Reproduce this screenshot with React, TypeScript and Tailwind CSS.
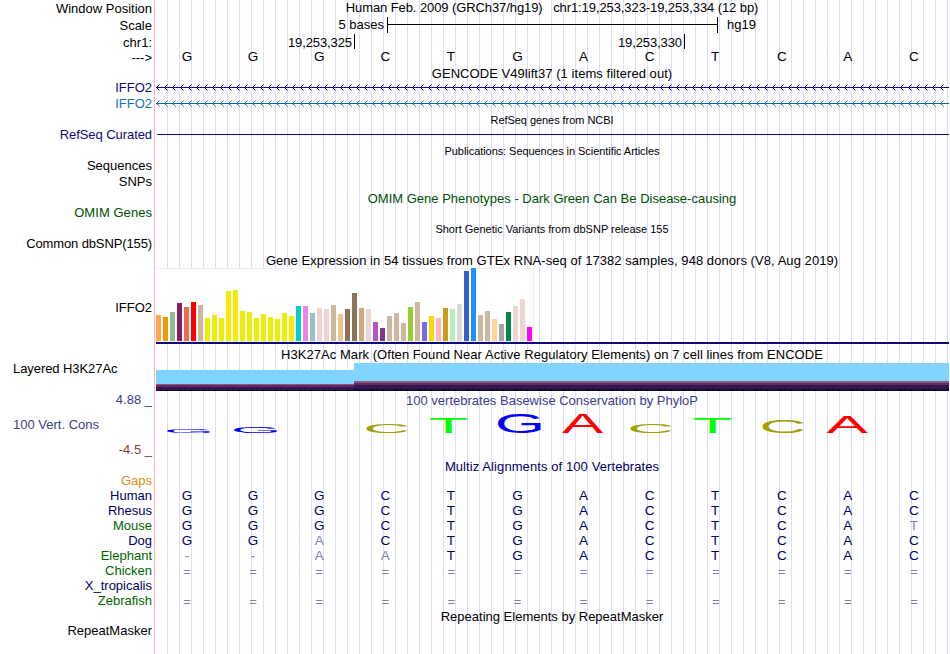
import type { ReactNode } from 'react';

const BASES = 'GGGCTGACTCAC'.split('');

const tissues: [string, number][] = [
  ['#ffa54f', 26], ['#ee9a00', 24], ['#8fbc8f', 29], ['#8b1c62', 38], ['#ee6a50', 34], ['#ff0000', 39],
  ['#cdb79e', 36], ['#eeee00', 23], ['#eeee00', 26], ['#eeee00', 23], ['#eeee00', 50], ['#eeee00', 51],
  ['#eeee00', 30], ['#eeee00', 29], ['#eeee00', 23], ['#eeee00', 27], ['#eeee00', 24], ['#eeee00', 22],
  ['#eeee00', 28], ['#eeee00', 25], ['#00cdcd', 35], ['#ee82ee', 35], ['#9ac0cd', 28], ['#eed5d2', 33],
  ['#eed5d2', 32], ['#cdb79e', 36], ['#eec591', 27], ['#8b7355', 32], ['#8b7355', 48], ['#cdaa7d', 33],
  ['#eed5d2', 32], ['#b452cd', 19], ['#7a378b', 13], ['#cdb79e', 25], ['#cdb79e', 28], ['#cdb79e', 18],
  ['#9acd32', 34], ['#cdb79e', 39], ['#7a67ee', 19], ['#ffd700', 25], ['#ffb6c1', 23], ['#cd9b1d', 33],
  ['#b4eeb4', 32], ['#d9d9d9', 37], ['#3a5fcd', 70], ['#1e90ff', 73], ['#cdb79e', 26], ['#cdb79e', 30],
  ['#ffd39b', 22], ['#a6a6a6', 17], ['#008b45', 29], ['#eed5d2', 35], ['#eed5d2', 42], ['#ff00ff', 14],
];

// letter, left edge, top edge, fill
const logo: [string, number, number, string][] = [
  ['G', 12, 22.2, '#0000ff'],
  ['G', 79, 19.5, '#0000ff'],
  ['C', 211.5, 17.3, '#a0a000'],
  ['T', 275, 10.4, '#00ff00'],
  ['G', 343, 6.2, '#0000ff'],
  ['A', 407, 7, '#ff0000'],
  ['C', 475.5, 17.3, '#a0a000'],
  ['T', 539, 10.4, '#00ff00'],
  ['C', 607.5, 12.3, '#a0a000'],
  ['A', 671.5, 9, '#ff0000'],
];

// side bearing, font size, cap height and baseline of each logo letter
const ink: Record<string, { left: number; size: number; cap: number; base: number }> = {
  G: { left: 3.3, size: 65, cap: 0.72, base: 25.6 },
  C: { left: 3.3, size: 65, cap: 0.72, base: 25.6 },
  T: { left: 1.3, size: 65, cap: 0.688, base: 26 },
  A: { left: 0, size: 62, cap: 0.688, base: 26 },
};

// lower case marks a base that differs from the human one
const species = [
  { name: 'Human', green: false, seq: 'GGGCTGACTCAC' },
  { name: 'Rhesus', green: false, seq: 'GGGCTGACTCAC' },
  { name: 'Mouse', green: true, seq: 'GGGCTGACTCAt' },
  { name: 'Dog', green: false, seq: 'GGaCTGACTCAC' },
  { name: 'Elephant', green: true, seq: '--aaTGACTCAC' },
  { name: 'Chicken', green: true, seq: '============' },
  { name: 'X_tropicalis', green: false, seq: '' },
  { name: 'Zebrafish', green: true, seq: '============' },
];

interface RowProps {
  label?: string;
  labelClass?: string;
  className: string;
  children?: ReactNode;
}

function Row({ label, labelClass = '', className, children }: RowProps) {
  return (
    <div className={`flex shrink-0 ${className}`}>
      <div className={`w-[155px] shrink-0 pr-[3px] text-right ${labelClass}`}>{label}</div>
      <div className="w-[794px] shrink-0">{children}</div>
    </div>
  );
}

function Title({ small, className = '', children }: { small?: boolean; className?: string; children: ReactNode }) {
  return (
    <div
      className={`text-center whitespace-pre ${small ? 'pt-0.5 text-[11px] leading-[12px]' : 'pt-px'} ${className}`}
    >
      {children}
    </div>
  );
}

function letterClass(c: string) {
  if (c === '=') return 'pt-px text-[13px] text-[#8080b0]';
  if (c === 'T') return '-ml-px';
  return /[a-z-]/.test(c) ? 'text-[#8080b0]' : '';
}

function Letters({ seq }: { seq: string[] }) {
  return (
    <div className="-ml-px grid w-[793px] grid-cols-12 text-center text-[13.5px] leading-[15px]">
      {seq.map((c, i) => (
        <span key={i} className={letterClass(c)}>
          {c.toUpperCase()}
        </span>
      ))}
    </div>
  );
}

function Intron({ color }: { color: string }) {
  return (
    <svg width="794" height="16" className="block" shapeRendering="crispEdges" fill={color}>
      <rect x="1" y="7" width="793" height="1" />
      {Array.from({ length: 99 }, (_, i) => (
        <g key={i} transform={`translate(${1 + i * 8} 0)`}>
          <rect x="1" y="6" width="1" height="3" />
          <rect x="2" y="5" width="1" height="1" />
          <rect x="2" y="9" width="1" height="1" />
          <rect x="3" y="4" width="1" height="1" opacity="0.5" />
          <rect x="3" y="10" width="1" height="1" opacity="0.5" />
        </g>
      ))}
    </svg>
  );
}

function ConservationLogo() {
  return (
    <svg width="794" height="50" className="block" fontFamily="Liberation Sans, sans-serif">
      {logo.map(([c, x, top, fill], i) => {
        const { left, size, cap, base } = ink[c];
        const scale = (26 - top) / (size * cap);
        return (
          <text key={i} transform={`translate(${x - left} ${base}) scale(1 ${scale})`} fontSize={size} fill={fill}>
            {c}
          </text>
        );
      })}
    </svg>
  );
}

export default function App() {
  return (
    <div className="flex h-[654px] w-[950px] overflow-hidden bg-white font-['Liberation_Sans',Arial,sans-serif] text-[13px] leading-[15px] text-black">
      <div className="flex w-[949px] flex-col bg-[linear-gradient(to_right,white_154px,#ffb4b4_154px,#ffb4b4_155px,white_155px,white_158px,transparent_158px),repeating-linear-gradient(to_right,#dcdcff_0px,#dcdcff_1px,white_1px,white_12px)] bg-no-repeat [background-position:0_0,11px_0]">
        {/* Ruler */}
        <Row className="h-[17px]" label="Window Position" labelClass="pt-px">
          <div className="text-center tracking-[-0.09px] whitespace-pre">
            Human Feb. 2009 (GRCh37/hg19){'   '}chr1:19,253,323-19,253,334 (12 bp)
          </div>
        </Row>
        <Row className="h-4" label="Scale" labelClass="pt-px">
          <div className="flex">
            <span className="w-[229px] text-right">5 bases</span>
            <div className="ml-[3px] flex h-4 w-[331px] items-center border-x border-black">
              <div className="-mt-px h-px w-full bg-black" />
            </div>
            <span className="ml-[9px]">hg19</span>
          </div>
        </Row>
        <Row className="h-4" label="chr1:" labelClass="pt-0.5">
          <div className="flex pt-px text-right tracking-[-0.1px]">
            <span className="h-[15px] w-[200px] border-r border-black pt-px pr-0.5">19,253,325</span>
            <span className="h-[15px] w-[330px] border-r border-black pt-px pr-0.5">19,253,330</span>
          </div>
        </Row>
        <Row className="h-4" label="--->" labelClass="pt-px">
          <Letters seq={BASES} />
        </Row>

        {/* Genes */}
        <Row className="h-[15px]">
          <Title className="tracking-[0.05px]">GENCODE V49lift37 (1 items filtered out)</Title>
        </Row>
        <Row className="h-4" label="IFFO2" labelClass="text-[#0c0c78]">
          <Intron color="#0c0c78" />
        </Row>
        <Row className="h-4" label="IFFO2" labelClass="text-[#1874b8]">
          <Intron color="#1464a8" />
        </Row>
        <Row className="h-[15px]">
          <Title small className="tracking-[-0.05px]">RefSeq genes from NCBI</Title>
        </Row>
        <Row className="h-4" label="RefSeq Curated" labelClass="tracking-[-0.07px] text-[#0c0c78]">
          <div className="mt-[7px] ml-0.5 h-px bg-[#0c0c78]" />
        </Row>

        {/* Literature and variants */}
        <Row className="h-[15px]">
          <Title small className="tracking-[-0.06px]">Publications: Sequences in Scientific Articles</Title>
        </Row>
        <Row className="h-4" label="Sequences" />
        <Row className="h-4" label="SNPs" />
        <Row className="h-[15px]">
          <Title className="text-[#005000]">OMIM Gene Phenotypes - Dark Green Can Be Disease-causing</Title>
        </Row>
        <Row className="h-4" label="OMIM Genes" labelClass="tracking-[0.05px] text-[#005000]" />
        <Row className="h-[15px]">
          <Title small>Short Genetic Variants from dbSNP release 155</Title>
        </Row>
        <Row className="h-4" label="Common dbSNP(155)" labelClass="tracking-[-0.12px]" />

        {/* GTEx */}
        <Row className="h-[15px]">
          <Title className="tracking-[0.055px]">
            Gene Expression in 54 tissues from GTEx RNA-seq of 17382 samples, 948 donors (V8, Aug 2019)
          </Title>
        </Row>
        <Row className="h-[79px]" label="IFFO2" labelClass="pt-[33px]">
          <div className="ml-px border-b-2 border-[#0c0c78] pt-px">
            <div className="flex h-[74px] w-[378px] items-end gap-0.5 border-t border-r border-b border-[#eeeeee] bg-white">
              {tissues.map(([color, height], i) => (
                <div key={i} className="w-[5px] shrink-0" style={{ height, backgroundColor: color }} />
              ))}
            </div>
          </div>
        </Row>

        {/* Regulation */}
        <Row className="h-[15px]">
          <Title className="tracking-[0.05px]">
            H3K27Ac Mark (Often Found Near Active Regulatory Elements) on 7 cell lines from ENCODE
          </Title>
        </Row>
        <Row className="h-[31px]" label="Layered H3K27Ac" labelClass="pl-[13px] !text-left tracking-[-0.07px]">
          <div className="flex h-[30px] items-end pl-px">
            <div className="h-[21px] w-[198px] bg-[linear-gradient(#80d4ff_14px,#806080_14px,#806080_15px,#6c2464_15px,#6c2464_17px,#301850_17px,#301850_20px,#180830_20px)]" />
            <div className="h-7 grow bg-[linear-gradient(#80d4ff_18px,#806080_18px,#806080_20px,#6c2464_20px,#6c2464_22px,#301850_22px,#301850_26px,#180830_26px)]" />
          </div>
        </Row>

        {/* Conservation */}
        <Row className="h-[15px]" label="4.88 _" labelClass="text-[#3c3c8c]">
          <Title className="text-[#3c3c8c]">100 vertebrates Basewise Conservation by PhyloP</Title>
        </Row>
        <div className="flex h-[51px]">
          <div className="flex w-[155px] shrink-0 flex-col justify-between pt-2.5 pr-[3px] pb-px">
            <span className="pl-[13px] text-[#3c3c8c]">100 Vert. Cons</span>
            <span className="text-right text-[#8c3c3c]">-4.5 _</span>
          </div>
          <ConservationLogo />
        </div>
        <Row className="h-[15px]">
          <Title className="tracking-[0.09px] text-[#000064]">Multiz Alignments of 100 Vertebrates</Title>
        </Row>
        <Row className="h-[15px]" label="Gaps" labelClass="text-[#e08c14]" />
        {species.map((s) => (
          <Row
            key={s.name}
            className="h-[15px] text-[#000064]"
            label={s.name}
            labelClass={s.green ? 'text-[#006400]' : ''}
          >
            <Letters seq={s.seq.split('')} />
          </Row>
        ))}

        {/* Repeats */}
        <Row className="h-[15px]">
          <Title>Repeating Elements by RepeatMasker</Title>
        </Row>
        <Row className="h-4" label="RepeatMasker" />
      </div>
    </div>
  );
}
